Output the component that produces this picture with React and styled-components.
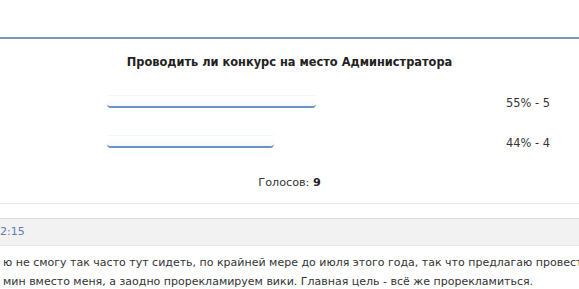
import React from 'react'
import styled, { createGlobalStyle } from 'styled-components'

const GlobalStyle = createGlobalStyle`
    html, body {
        margin: 0;
        padding: 0;
        background: #fff;
    }

    body {
        font-family: "DejaVu Sans", Verdana, sans-serif;
        font-size: 11px;
        color: #333;
        overflow: hidden;
    }
`;

const Page = styled.div`
    width: 579px;
    height: 289px;
    padding-top: 37px;
    box-sizing: border-box;
    overflow: hidden;
`;

const Poll = styled.div`
    border-top: 2px solid #7799b6;
    border-bottom: 1px solid #e7e7e7;
    padding-top: 15px;
`;

const PollTitle = styled.div`
    text-align: center;
    font-weight: bold;
    font-size: 11.4px;
    line-height: 17px;
    color: #222;
    margin-bottom: 12px;
`;

const AnswerRow = styled.div`
    display: flex;
    align-items: center;
    height: 40px;
    padding-left: 107px;
`;

const Track = styled.div`
    width: 380px;
    margin-bottom: 4px;
`;

const Bar = styled.div`
    height: 10px;
    background: linear-gradient(#ffffff, #f7f9fc);
    border-top: 1px solid #f3f6fa;
    border-bottom: 2px solid #6893c3;
    border-radius: 0 0 4px 4px;
`;

const Result = styled.div`
    margin-left: 19px;
    font-size: 11.4px;
    color: #333;
`;

const Votes = styled.div`
    height: 40px;
    line-height: 40px;
    text-align: center;
    font-size: 11.2px;

    b {
        color: #222;
    }
`;

const Post = styled.div`
    margin-top: 14px;
`;

const PostHeader = styled.div`
    height: 26px;
    line-height: 26px;
    background: #f2f2f2;
    border-top: 1px solid #dedede;
    border-bottom: 1px solid #e6e6e6;
    color: #5b80a8;
`;

const PostBody = styled.div`
    padding: 7px 0 0 3px;
    line-height: 19px;
    white-space: nowrap;
    color: #333;
`;

const answers = [
    { percent: 55, count: 5 },
    { percent: 44, count: 4 },
];

export default function App() {
    return (
        <Page>
            <GlobalStyle />
            <Poll>
                <PollTitle>Проводить ли конкурс на место Администратора</PollTitle>
                {answers.map((a, i) => (
                    <AnswerRow key={i}>
                        <Track>
                            <Bar style={{ width: `${a.percent}%` }} />
                        </Track>
                        <Result>{a.percent}% - {a.count}</Result>
                    </AnswerRow>
                ))}
                <Votes>Голосов: <b>9</b></Votes>
            </Poll>
            <Post>
                <PostHeader>2:15</PostHeader>
                <PostBody>
                    <div>ю не смогу так часто тут сидеть, по крайней мере до июля этого года, так что предлагаю провести</div>
                    <div>мин вместо меня, а заодно прорекламируем вики. Главная цель - всё же прорекламиться.</div>
                </PostBody>
            </Post>
        </Page>
    );
}
